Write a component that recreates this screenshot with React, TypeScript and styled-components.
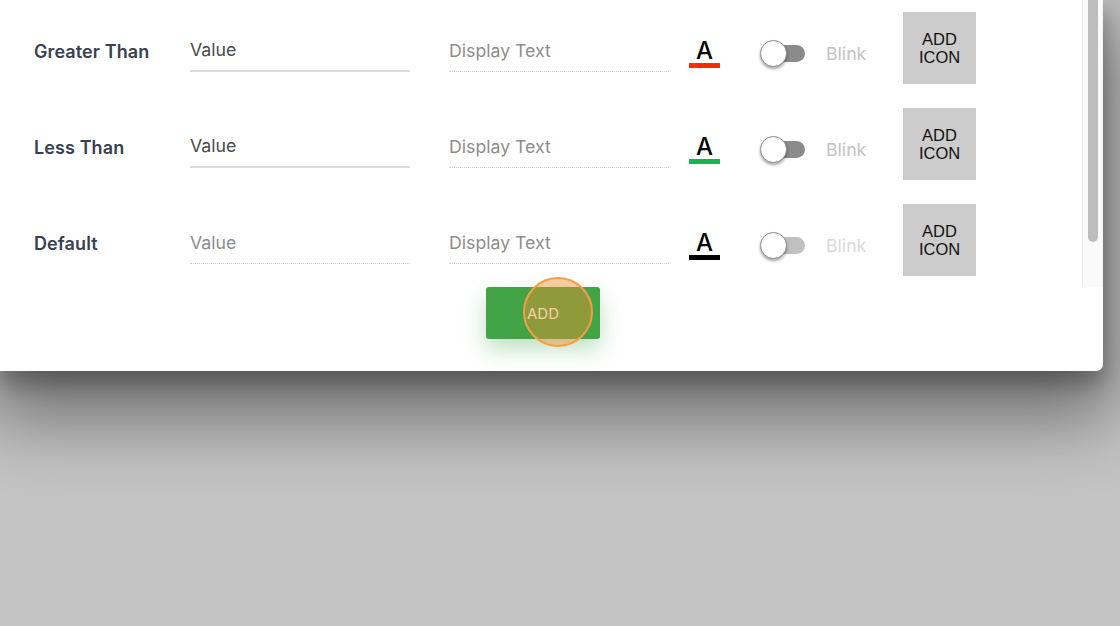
import React from "react";
import styled, { createGlobalStyle } from "styled-components";

const Global = createGlobalStyle`
  html, body { margin: 0; padding: 0; }
  body {
    background: #c3c3c3;
    width: 1120px;
    height: 626px;
    overflow: hidden;
    font-family: Inter, "Open Sans", sans-serif;
  }
`;

const Panel = styled.div`
  width: 1103px;
  height: 371px;
  background: #fff;
  border-bottom-right-radius: 7px;
  box-shadow: 0 12px 22px rgba(0, 0, 0, 0.28), 0 36px 70px 12px rgba(0, 0, 0, 0.42);
  display: flex;
  flex-direction: column;
  position: relative;
`;

const ScrollArea = styled.div`
  height: 287px;
  display: flex;
`;

const Rows = styled.div`
  flex: 1;
  display: flex;
  flex-direction: column;
  gap: 24px;
  padding: 12px 0 0 34px;
`;

const Track = styled.div`
  width: 18px;
  background: #fafafa;
  border-left: 1px solid #ececec;
  border-right: 1px solid #f4f4f4;
  display: flex;
  justify-content: center;
  padding-left: 1px;
`;

const Thumb = styled.div`
  width: 10px;
  height: 242px;
  background: #bdbdbd;
  border-radius: 0 0 6px 6px;
`;

const Row = styled.div`
  height: 72px;
  display: flex;
  align-items: center;
`;

const Label = styled.div`
  width: 156px;
  font-size: 18px;
  font-weight: 600;
  color: #394150;
  margin-top: 7px;
  letter-spacing: 0.1px;
`;

const Field = styled.div<{ $width: number; $gap: number; $solid?: boolean; $muted?: boolean }>`
  width: ${(p) => p.$width}px;
  margin-right: ${(p) => p.$gap}px;
  height: 40px;
  margin-top: 7px;
  box-sizing: border-box;
  display: flex;
  align-items: center;
  padding-bottom: 2px;
  font-size: 17.7px;
  color: ${(p) => (p.$muted ? "#8d8d8d" : "#4a4a4a")};
  border-bottom: ${(p) => (p.$solid ? "2px solid #dcdcdc" : "1px dotted #cfcfcf")};
`;

const ColorIcon = styled.div`
  width: 31px;
  margin-left: 20px;
  margin-right: 40px;
  margin-top: 10px;
  display: flex;
  flex-direction: column;
  align-items: center;
`;

const Letter = styled.span`
  font-family: Inter, "Liberation Sans", sans-serif;
  font-size: 24px;
  line-height: 23px;
  color: #000;
  font-weight: 500;
`;

const Bar = styled.div<{ $color: string }>`
  width: 31px;
  height: 5px;
  margin-top: 1px;
  background: ${(p) => p.$color};
`;

const Toggle = styled.div`
  position: relative;
  width: 45px;
  height: 27px;
  margin-top: 10px;
  margin-right: 21px;
  display: flex;
  align-items: center;
`;

const ToggleTrack = styled.div<{ $disabled?: boolean }>`
  margin-left: 10px;
  width: 35px;
  height: 17px;
  border-radius: 9px;
  background: ${(p) => (p.$disabled ? "#c0c0c0" : "#8a8a8a")};
`;

const Knob = styled.div`
  position: absolute;
  left: 0;
  top: 0;
  width: 25px;
  height: 25px;
  border-radius: 50%;
  background: #fff;
  border: 1px solid #8c8c8c;
  box-shadow: 0 2px 3px rgba(0, 0, 0, 0.35);
`;

const Blink = styled.span<{ $disabled?: boolean }>`
  width: 77px;
  font-size: 17.7px;
  margin-top: 11px;
  color: ${(p) => (p.$disabled ? "#dadada" : "#c2c2c2")};
`;

const IconBox = styled.div`
  width: 73px;
  height: 72px;
  background: #cccccc;
  display: flex;
  align-items: center;
  justify-content: center;
  text-align: center;
  font-family: "Liberation Sans", Arial, sans-serif;
  font-size: 16.5px;
  line-height: 18px;
  color: #111;
`;

const Footer = styled.div`
  flex: 1;
  display: flex;
  justify-content: center;
  padding-right: 17px;
`;

const AddButton = styled.div`
  position: relative;
  width: 114px;
  height: 52px;
  background: #43a447;
  border-radius: 3px;
  color: #fff;
  font-size: 15px;
  display: flex;
  align-items: center;
  justify-content: center;
  box-shadow: 0 10px 22px rgba(67, 164, 71, 0.35);
`;

const Touch = styled.div`
  position: absolute;
  left: 37px;
  top: -10px;
  width: 66px;
  height: 66px;
  border-radius: 50%;
  border: 2.5px solid #f59d48;
  background: rgba(244, 141, 45, 0.43);
`;

type RowData = {
  label: string;
  color: string;
  disabled?: boolean;
};

const rows: RowData[] = [
  { label: "Greater Than", color: "#ff2a00" },
  { label: "Less Than", color: "#17b552" },
  { label: "Default", color: "#000000", disabled: true },
];

export default function App() {
  return (
    <>
      <Global />
      <Panel>
        <ScrollArea>
          <Rows>
            {rows.map((r) => (
              <Row key={r.label}>
                <Label>{r.label}</Label>
                <Field $width={220} $gap={39} $solid={!r.disabled} $muted={r.disabled}>
                  Value
                </Field>
                <Field $width={220} $gap={0} $muted>
                  Display Text
                </Field>
                <ColorIcon>
                  <Letter>A</Letter>
                  <Bar $color={r.color} />
                </ColorIcon>
                <Toggle>
                  <ToggleTrack $disabled={r.disabled} />
                  <Knob />
                </Toggle>
                <Blink $disabled={r.disabled}>Blink</Blink>
                <IconBox>
                  ADD
                  <br />
                  ICON
                </IconBox>
              </Row>
            ))}
          </Rows>
          <Track>
            <Thumb />
          </Track>
        </ScrollArea>
        <Footer>
          <AddButton>
            ADD
            <Touch />
          </AddButton>
        </Footer>
      </Panel>
    </>
  );
}
